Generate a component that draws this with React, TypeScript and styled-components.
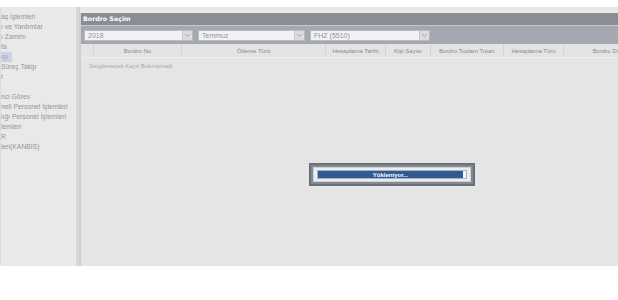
import React from 'react';
import styled, { createGlobalStyle } from 'styled-components';

const GlobalStyle = createGlobalStyle`
  html, body {
    margin: 0;
    padding: 0;
    background: #ffffff;
    font-family: "Liberation Sans", Arial, sans-serif;
  }
`;

const menuItems = [
  { label: 'aş İşlemleri' },
  { label: 'ı ve Yardımlar' },
  { label: 'ı Zammı' },
  { label: 'fa' },
  { label: 'ışı', active: true },
  { label: 'Süreç Takip' },
  { label: 'r' },
  { label: '' },
  { label: 'nci Görev' },
  { label: 'neli Personel İşlemleri' },
  { label: 'lığı Personel İşlemleri' },
  { label: 'lemleri' },
  { label: 'R' },
  { label: 'leri(KANBİS)' },
];

const columns = [
  { title: '', width: 12 },
  { title: 'Bordro No', width: 88 },
  { title: 'Ödeme Türü', width: 144 },
  { title: 'Hesaplama Tarihi', width: 60 },
  { title: 'Kişi Sayısı', width: 45 },
  { title: 'Bordro Toplam Tutarı', width: 73 },
  { title: 'Hesaplama Türü', width: 60 },
  { title: 'Bordro Dö', width: 56 },
];

export default function App() {
  return (
    <>
      <GlobalStyle />
      <Page>
        <Sidebar>
          {menuItems.map((m, i) => (
            <MenuItem key={i} active={m.active}>{m.label}</MenuItem>
          ))}
        </Sidebar>
        <Splitter />
        <Panel>
          <PanelHeader>Bordro Seçim</PanelHeader>
          <Toolbar>
            <Combo width={109} value="2018" />
            <Combo width={107} value="Temmuz" />
            <Combo width={120} value="FHZ (5510)" />
          </Toolbar>
          <GridHead>
            {columns.map((c, i) => (
              <HeadCell key={i} style={{ width: c.width }}>{c.title}</HeadCell>
            ))}
          </GridHead>
          <EmptyText>Sergilenecek Kayıt Bulunamadı.</EmptyText>
          <Loading>
            <LoadingInner>
              <ProgressBar>
                <ProgressFill>Yükleniyor...</ProgressFill>
              </ProgressBar>
            </LoadingInner>
          </Loading>
        </Panel>
      </Page>
    </>
  );
}

function Combo(props: { width: number; value: string }) {
  return (
    <ComboBox style={{ width: props.width }}>
      <ComboText>{props.value}</ComboText>
      <ComboArrow>
        <svg width="7" height="5" viewBox="0 0 7 5">
          <path d="M1 1 L3.5 3.5 L6 1" stroke="#a3a7ad" strokeWidth="1" fill="none" />
        </svg>
      </ComboArrow>
    </ComboBox>
  );
}

const Page = styled.div`
  display: flex;
  margin-top: 7px;
  height: 259px;
  background: #e8e8e8;
  overflow: hidden;
`;

const Sidebar = styled.div`
  width: 75px;
  flex-shrink: 0;
  padding-top: 5px;
  border-left: 1px solid #dcdcdc;
  background: #e9e9e9;
  overflow: hidden;
`;

const MenuItem = styled.div<{ active?: boolean }>`
  height: 10px;
  line-height: 10px;
  font-size: 6.8px;
  color: ${p => (p.active ? '#a6acc8' : '#959595')};
  white-space: nowrap;
  width: ${p => (p.active ? '11px' : 'auto')};
  background: ${p => (p.active ? '#cdd1e2' : 'transparent')};
`;

const Splitter = styled.div`
  width: 3px;
  flex-shrink: 0;
  background: #d9d9d9;
  border-right: 1px solid #cfcfcf;
`;

const Panel = styled.div`
  position: relative;
  flex: 1;
  margin-top: 6px;
  background: #e5e5e5;
  border-left: 1px solid #d0d0d0;
  min-width: 0;
`;

const PanelHeader = styled.div`
  height: 12px;
  line-height: 12px;
  padding-left: 2px;
  background: #898e95;
  color: #ffffff;
  font-size: 6.3px;
  font-weight: bold;
  font-family: "DejaVu Sans", Verdana, sans-serif;
`;

const Toolbar = styled.div`
  display: flex;
  gap: 5px;
  align-items: center;
  height: 19px;
  padding-left: 3px;
  background: #a4a9b1;
  border-top: 1px solid #c5c8cd;
  box-sizing: border-box;
`;

const ComboBox = styled.div`
  display: flex;
  height: 11px;
  border: 1px solid #b9bcc1;
  background: #f2f2f2;
  box-sizing: border-box;
`;

const ComboText = styled.div`
  flex: 1;
  font-size: 7px;
  line-height: 9px;
  padding-left: 3px;
  color: #939393;
`;

const ComboArrow = styled.div`
  width: 9px;
  display: flex;
  align-items: center;
  justify-content: center;
  background: #dcdcdc;
  border-left: 1px solid #c8c8c8;
`;

const GridHead = styled.div`
  display: flex;
  height: 13px;
  padding-left: 1px;
  border-bottom: 1px solid #eeeeee;
  background: #e4e4e4;
`;

const HeadCell = styled.div`
  flex-shrink: 0;
  box-sizing: border-box;
  border-right: 1px solid #d4d4d4;
  font-size: 6px;
  line-height: 14px;
  color: #8a8a8a;
  text-align: center;
  white-space: nowrap;
  overflow: hidden;

  &:last-child {
    border-right: none;
    text-align: right;
  }
`;

const EmptyText = styled.div`
  padding: 5px 0 0 8px;
  font-size: 6px;
  color: #a8a8a8;
`;

const Loading = styled.div`
  position: absolute;
  left: 228px;
  top: 150px;
  width: 166px;
  height: 23px;
  box-sizing: border-box;
  border: 2px solid #6a7078;
  background: #848a92;
  padding: 2px;
`;

const LoadingInner = styled.div`
  height: 100%;
  box-sizing: border-box;
  background: #e9ecf0;
  border: 1px solid #cfd3d8;
  padding: 2px 3px;
`;

const ProgressBar = styled.div`
  height: 100%;
  background: #f4f6f8;
  border: 1px solid #aab2bd;
  box-sizing: border-box;
`;

const ProgressFill = styled.div`
  width: 145px;
  height: 100%;
  background: #2f5a94;
  color: #ffffff;
  font-size: 6px;
  font-weight: bold;
  text-align: center;
  display: flex;
  align-items: center;
  justify-content: center;
`;
